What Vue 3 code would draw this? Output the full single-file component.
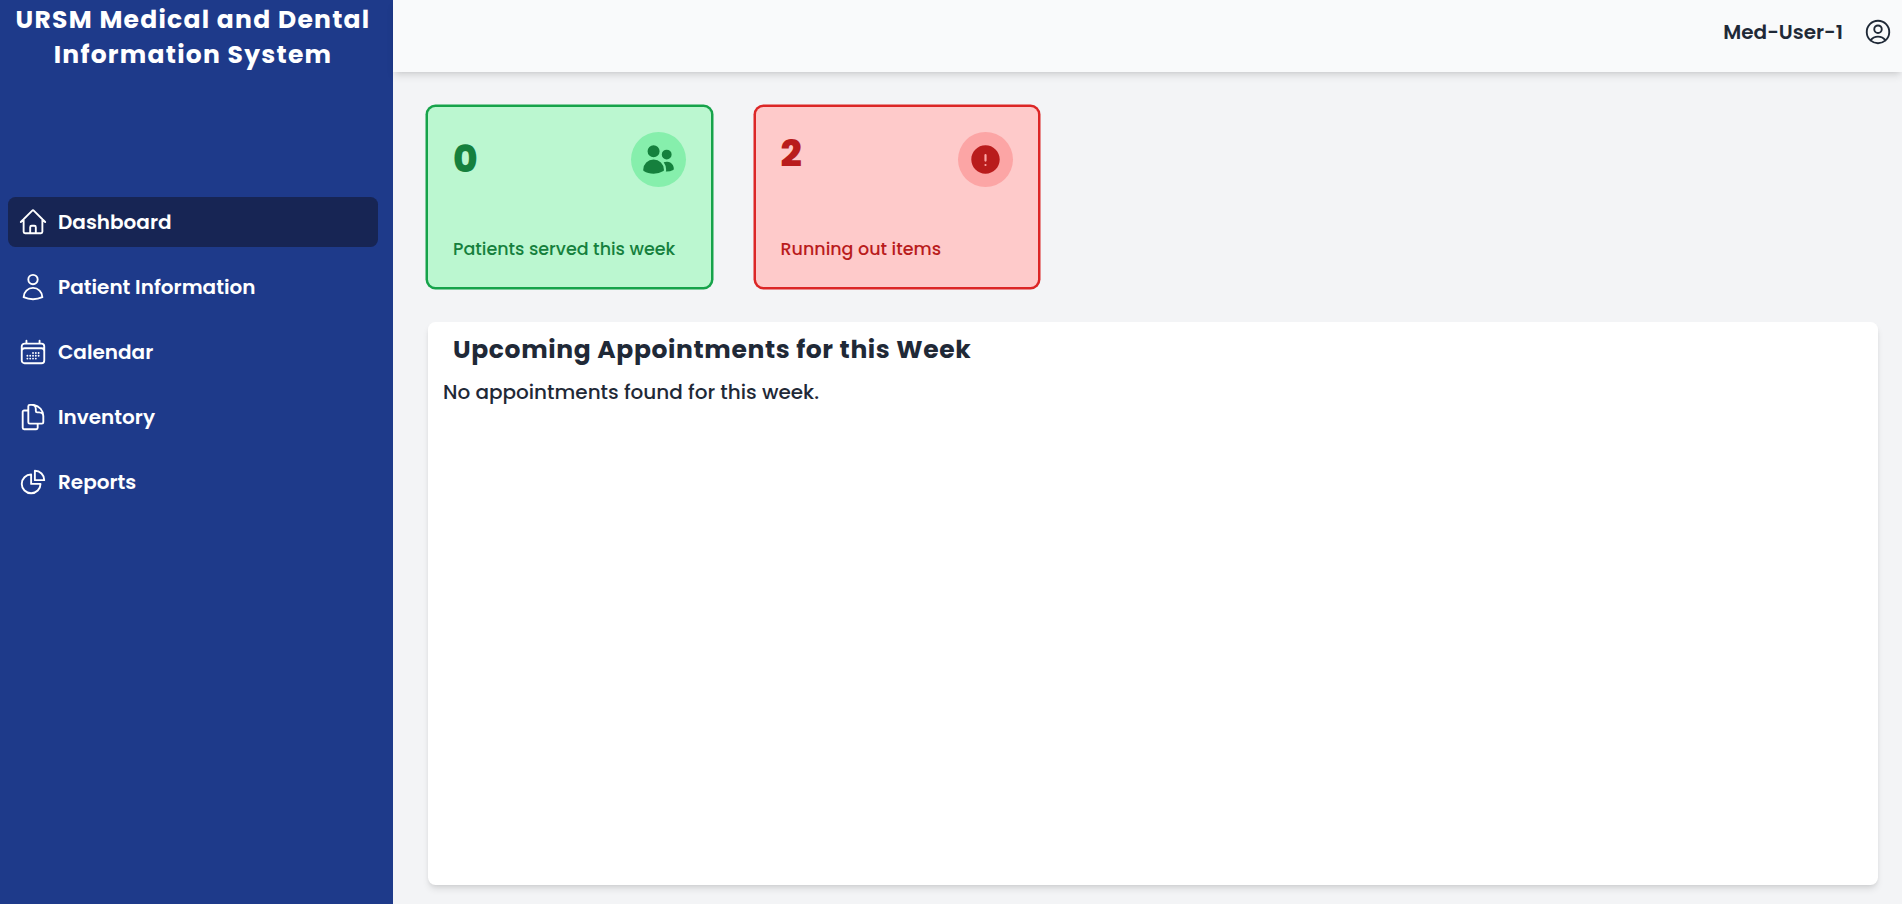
<script setup>
const nav = [
  {
    label: 'Dashboard', active: true,
    paths: ['m2.25 12 8.954-8.955c.44-.439 1.152-.439 1.591 0L21.75 12M4.5 9.75v10.125c0 .621.504 1.125 1.125 1.125H9.75v-4.875c0-.621.504-1.125 1.125-1.125h2.25c.621 0 1.125.504 1.125 1.125V21h4.125c.621 0 1.125-.504 1.125-1.125V9.75M8.25 21h8.25']
  },
  {
    label: 'Patient Information',
    paths: ['M15.75 6a3.75 3.75 0 1 1-7.5 0 3.75 3.75 0 0 1 7.5 0ZM4.501 20.118a7.5 7.5 0 0 1 14.998 0A17.933 17.933 0 0 1 12 21.75c-2.676 0-5.216-.584-7.499-1.632Z']
  },
  {
    label: 'Calendar',
    paths: ['M6.75 3v2.25M17.25 3v2.25M3 18.75V7.5a2.25 2.25 0 0 1 2.25-2.25h13.5A2.25 2.25 0 0 1 21 7.5v11.25m-18 0A2.25 2.25 0 0 0 5.25 21h13.5A2.25 2.25 0 0 0 21 18.75m-18 0v-7.5A2.25 2.25 0 0 1 5.25 9h13.5A2.25 2.25 0 0 1 21 11.25v7.5m-9-6h.008v.008H12v-.008ZM12 15h.008v.008H12V15Zm0 2.25h.008v.008H12v-.008ZM9.75 15h.008v.008H9.75V15Zm0 2.25h.008v.008H9.75v-.008ZM7.5 15h.008v.008H7.5V15Zm0 2.25h.008v.008H7.5v-.008Zm6.75-4.5h.008v.008h-.008v-.008Zm0 2.25h.008v.008h-.008V15Zm0 2.25h.008v.008h-.008v-.008Zm2.25-4.5h.008v.008H16.5v-.008Zm0 2.25h.008v.008H16.5V15Z']
  },
  {
    label: 'Inventory',
    paths: ['M15.75 17.25v3.375c0 .621-.504 1.125-1.125 1.125h-9.75a1.125 1.125 0 0 1-1.125-1.125V7.875c0-.621.504-1.125 1.125-1.125H6.75a9.06 9.06 0 0 1 1.5.124m7.5 10.376h3.375c.621 0 1.125-.504 1.125-1.125V11.25c0-4.46-3.243-8.161-7.5-8.876a9.06 9.06 0 0 0-1.5-.124H9.375c-.621 0-1.125.504-1.125 1.125v3.5m7.5 10.375H9.375a1.125 1.125 0 0 1-1.125-1.125v-9.25m12 6.625v-1.875a3.375 3.375 0 0 0-3.375-3.375h-1.5a1.125 1.125 0 0 1-1.125-1.125v-1.5a3.375 3.375 0 0 0-3.375-3.375H9.75']
  },
  {
    label: 'Reports',
    paths: ['M10.5 6a7.5 7.5 0 1 0 7.5 7.5h-7.5V6Z', 'M13.5 10.5H21A7.5 7.5 0 0 0 13.5 3v7.5Z']
  }
]
</script>

<template>
  <div class="app">
    <aside class="sidebar">
      <h1 class="brand">
        <span>URSM Medical and Dental</span>
        <span>Information System</span>
      </h1>
      <nav class="nav">
        <a v-for="n in nav" :key="n.label" class="nav-item" :class="{ active: n.active }">
          <svg class="outline" viewBox="0 0 24 24">
            <path v-for="p in n.paths" :key="p" :d="p" />
          </svg>
          <span>{{ n.label }}</span>
        </a>
      </nav>
    </aside>

    <div class="content">
      <header class="topbar">
        <span class="user">Med-User-1</span>
        <svg class="outline" viewBox="0 0 24 24">
          <path d="M17.982 18.725A7.488 7.488 0 0 0 12 15.75a7.488 7.488 0 0 0-5.982 2.975m11.963 0a9 9 0 1 0-11.963 0m11.963 0A8.966 8.966 0 0 1 12 21a8.966 8.966 0 0 1-5.982-2.275M15 9.75a3 3 0 1 1-6 0 3 3 0 0 1 6 0Z" />
        </svg>
      </header>

      <main class="main">
        <div class="cards">
          <section class="card green">
            <div class="card-top">
              <span class="count">0</span>
              <span class="badge">
                <svg viewBox="0 0 24 24">
                  <path d="M4.5 6.375a4.125 4.125 0 1 1 8.25 0 4.125 4.125 0 0 1-8.25 0ZM14.25 8.625a3.375 3.375 0 1 1 6.75 0 3.375 3.375 0 0 1-6.75 0ZM1.5 19.125a7.125 7.125 0 0 1 14.25 0v.003l-.001.119a.75.75 0 0 1-.363.63 13.067 13.067 0 0 1-6.761 1.873c-2.472 0-4.786-.684-6.76-1.873a.75.75 0 0 1-.364-.63l-.001-.122ZM17.25 19.128l-.001.144a2.25 2.25 0 0 1-.233.96 10.088 10.088 0 0 0 5.06-1.01.75.75 0 0 0 .42-.643 4.875 4.875 0 0 0-6.957-4.611 8.586 8.586 0 0 1 1.71 5.157v.003Z" />
                </svg>
              </span>
            </div>
            <p class="label">Patients served this week</p>
          </section>
          <section class="card red">
            <div class="card-top">
              <span class="count">2</span>
              <span class="badge">
                <svg viewBox="0 0 24 24">
                  <path fill-rule="evenodd" d="M2.25 12c0-5.385 4.365-9.75 9.75-9.75s9.75 4.365 9.75 9.75-4.365 9.75-9.75 9.75S2.25 17.385 2.25 12ZM12 8.25a.75.75 0 0 1 .75.75v3.75a.75.75 0 0 1-1.5 0V9a.75.75 0 0 1 .75-.75Zm0 8.25a.75.75 0 1 0 0-1.5.75.75 0 0 0 0 1.5Z" />
                </svg>
              </span>
            </div>
            <p class="label">Running out items</p>
          </section>
        </div>

        <section class="panel">
          <h2>Upcoming Appointments for this Week</h2>
          <p>No appointments found for this week.</p>
        </section>
      </main>
    </div>
  </div>
</template>

<style>
html, body { margin: 0; overflow: hidden; }
</style>

<style scoped>
* { box-sizing: border-box; }
.app {
  display: flex;
  width: 100%;
  height: 904px;
  background: #f3f4f6;
  color: #1f2937;
  font-family: Poppins, Inter, "Noto Sans", sans-serif;
}
.outline {
  width: 30px;
  height: 30px;
  flex: none;
  fill: none;
  stroke: currentColor;
  stroke-width: 1.5;
  stroke-linecap: round;
  stroke-linejoin: round;
}

.sidebar {
  width: 393px;
  flex: none;
  padding: 2px 15px 0 8px;
  background: #1e3a8a;
  color: #fff;
}
.brand {
  margin: 0;
  height: 70px;
  font-size: 25px;
  line-height: 35px;
  font-weight: 700;
  letter-spacing: 1.25px;
  text-align: center;
}
.brand span { display: block; white-space: nowrap; }
.nav {
  display: flex;
  flex-direction: column;
  gap: 15px;
  margin-top: 125px;
}
.nav-item {
  display: flex;
  align-items: center;
  gap: 10px;
  height: 50px;
  padding: 0 10px;
  border-radius: 7.5px;
  font-size: 20px;
  line-height: 30px;
  font-weight: 600;
}
.active { background: #172554; }

.content {
  flex: 1;
  min-width: 0;
  display: flex;
  flex-direction: column;
}
.topbar {
  height: 72px;
  flex: none;
  display: flex;
  justify-content: flex-end;
  align-items: center;
  gap: 20px;
  padding: 0 9px 8px 0;
  background: #f9fafb;
  box-shadow: 0 5px 7.5px -1.25px rgba(0, 0, 0, 0.1), 0 2.5px 5px -2.5px rgba(0, 0, 0, 0.1);
}
.user { font-size: 20px; font-weight: 600; }

.main {
  flex: 1;
  display: flex;
  flex-direction: column;
  padding: 34.5px 24px 19px 35px;
}
.cards { display: flex; gap: 45px; }
.card {
  width: 282.5px;
  height: 180.5px;
  padding: 25px;
  border-radius: 7.5px;
  display: flex;
  flex-direction: column;
  justify-content: space-between;
}
.green { background: #bbf7d0; color: #15803d; box-shadow: 0 0 0 2.5px #16a34a; }
.red { background: #fecaca; color: #b91c1c; box-shadow: 0 0 0 2.5px #dc2626; }
.card-top { display: flex; justify-content: space-between; height: 55px; }
.count { font-size: 37.5px; line-height: 45px; font-weight: 800; }
.green .count { padding-top: 5px; }
.red .count { line-height: 43px; }
.badge {
  width: 55px;
  height: 55px;
  padding: 10px;
  border-radius: 50%;
}
.badge svg { display: block; width: 35px; height: 35px; fill: currentColor; }
.green .badge { background: #86efac; }
.red .badge { background: #fca5a5; }
.label {
  margin: 0;
  font-size: 17.5px;
  line-height: 25px;
  font-weight: 500;
  white-space: nowrap;
}

.panel {
  flex: 1;
  margin-top: 35px;
  padding: 10px 15px;
  border-radius: 7.5px;
  background: #fff;
  box-shadow: 0 5px 7.5px -1.25px rgba(0, 0, 0, 0.1), 0 2.5px 5px -2.5px rgba(0, 0, 0, 0.1);
}
.panel h2 {
  margin: 0 0 10px 10px;
  font-size: 25px;
  line-height: 35px;
  font-weight: 700;
  letter-spacing: 0.625px;
}
.panel p {
  margin: 0;
  font-size: 20px;
  line-height: 30px;
  font-weight: 500;
}
</style>
